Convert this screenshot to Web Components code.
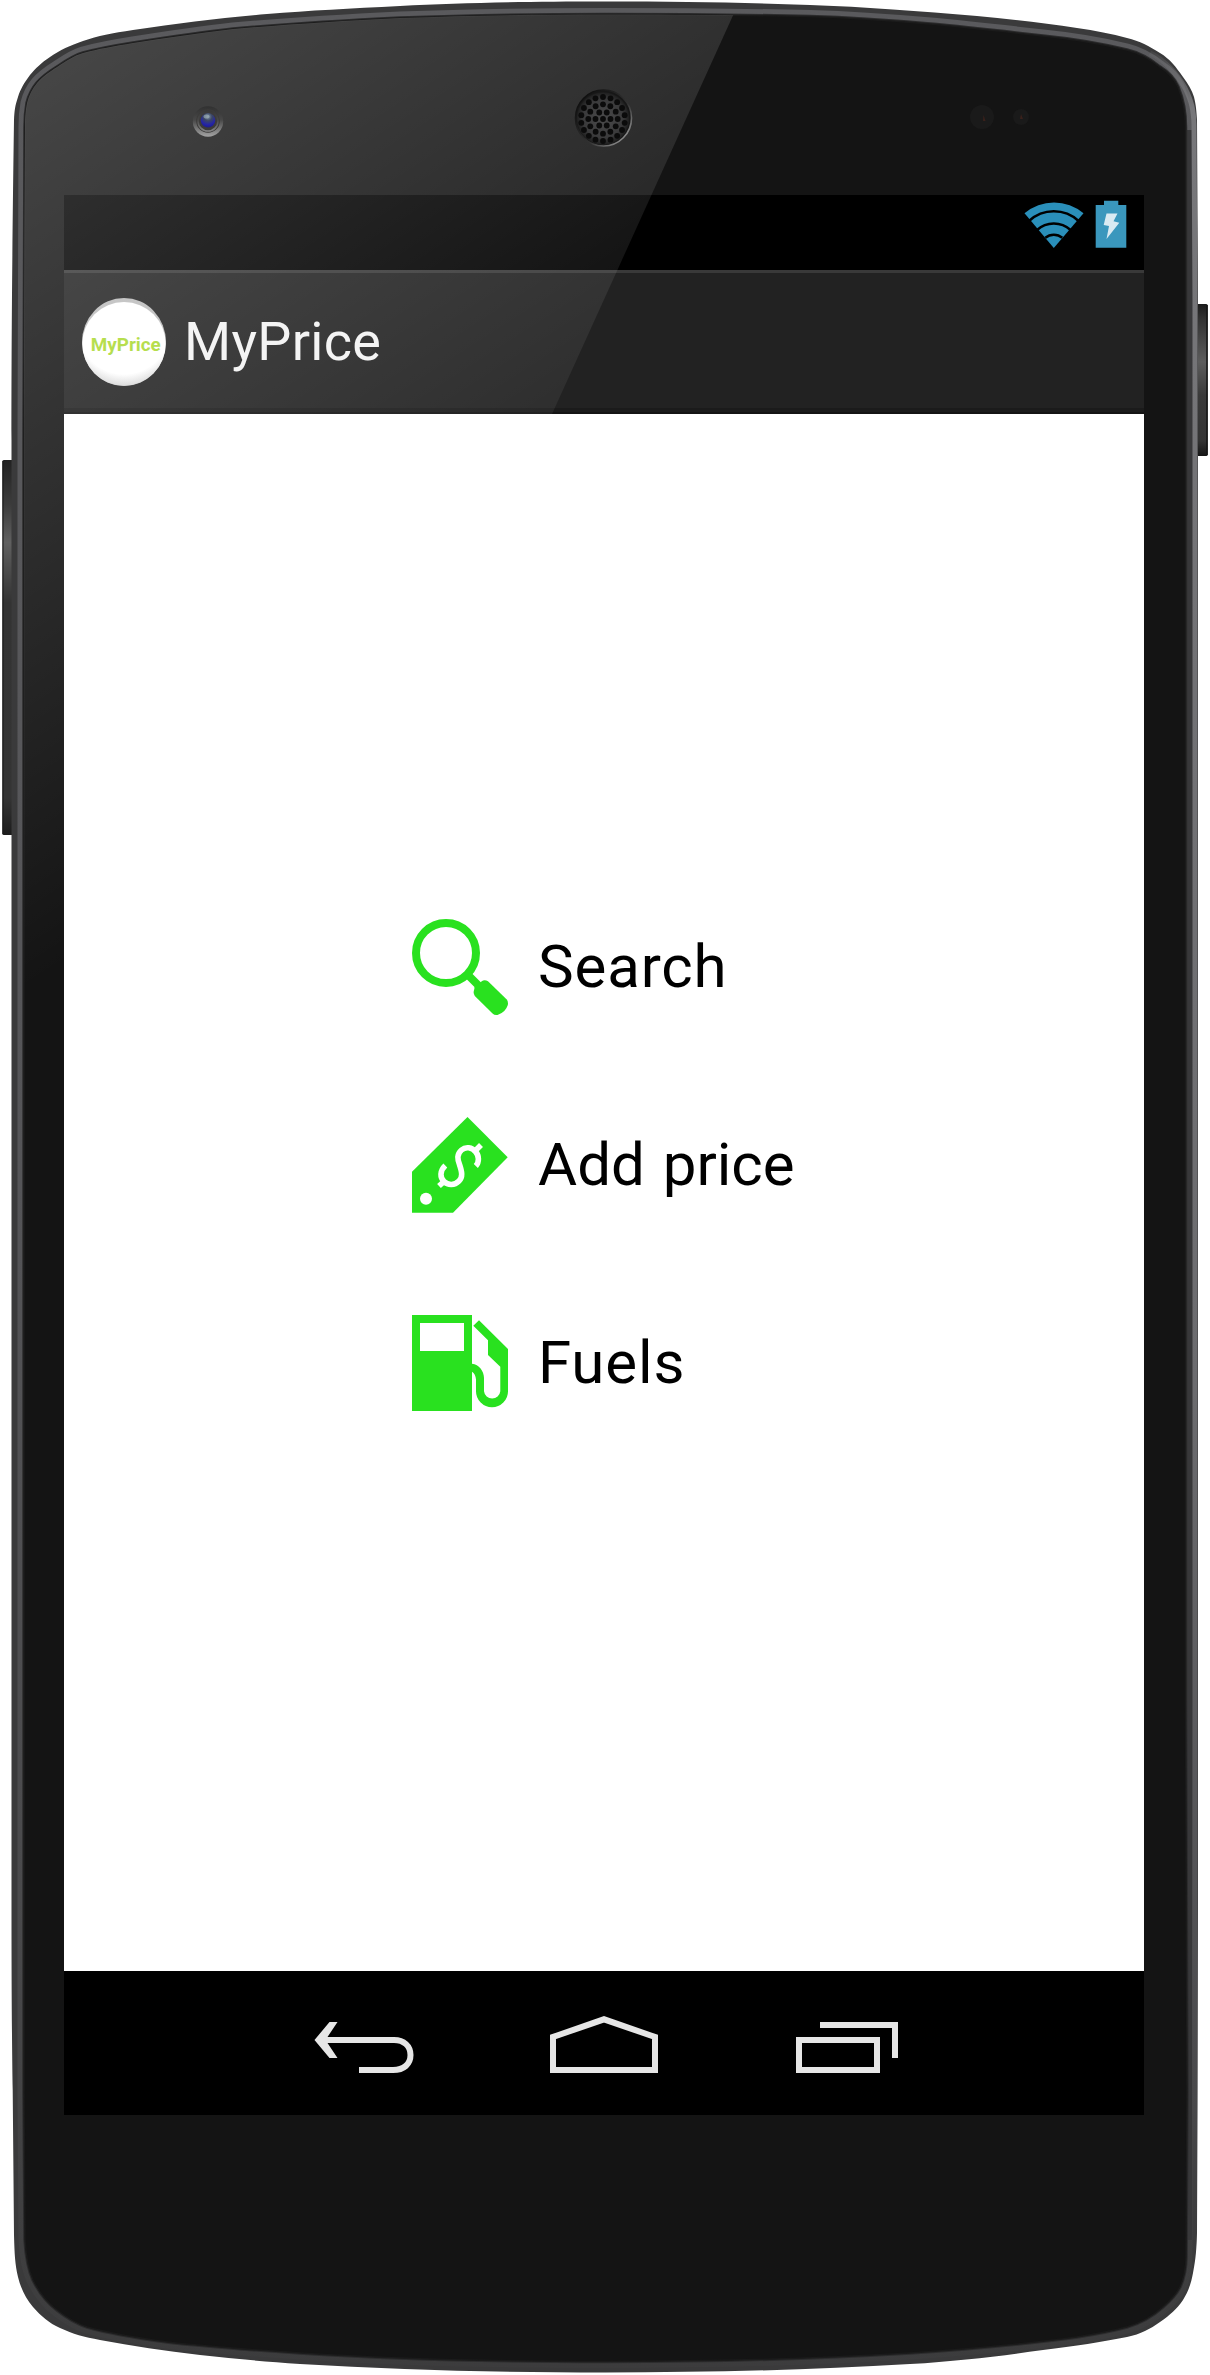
<!DOCTYPE html>
<html lang="en">
<head>
<meta charset="utf-8">
<title>MyPrice</title>
<style>
  html, body { margin: 0; background: #fff; }
  body { width: 1210px; height: 2375px; overflow: hidden; font-family: Roboto, "Liberation Sans", sans-serif; }
</style>
</head>
<body>
<phone-frame>
  <status-bar></status-bar>
  <action-bar>MyPrice</action-bar>
  <main-menu>
    <menu-row icon="search">Search</menu-row>
    <menu-row icon="tag">Add price</menu-row>
    <menu-row icon="fuel">Fuels</menu-row>
  </main-menu>
  <nav-bar></nav-bar>
</phone-frame>
<script>
const define = (name, html) => customElements.define(name, class extends HTMLElement {
  constructor() {
    super();
    this.attachShadow({ mode: 'open' }).innerHTML = html;
  }
});

/* Speaker grille: concentric rings of holes */
const holes = [[0, 1], [7.5, 6], [14.7, 12], [22, 18]].map(([r, n]) =>
  Array.from({ length: n }, (_, i) => {
    const a = i / n * 2 * Math.PI - (n === 6 ? 0 : Math.PI / 2);
    return `<circle cx="${(603 + r * Math.cos(a)).toFixed(2)}" cy="${(119 + r * Math.sin(a)).toFixed(2)}" r="2.9"/>`;
  }).join('')).join('');

const OUTER = 'M605 1.5C520 1.5 460 3 400 6C350 8.500 310 10.500 267 14C220 18 180 23 133 30C112 33 98 36 83 41C70 45.500 60 50 50 57C41 63 36 68 30 75C24 83 20.500 89 18 97C15 106 14.500 110 14 120C12 260 11.500 350 11.500 440V1900C11.500 1990 12 2050 12.700 2090L14 2235C14.500 2254 15 2264 18 2277C21 2289 26 2299 33 2307C41 2316 49 2323 60 2328C73 2334 84 2337 100 2340C132 2346 165 2351 200 2355C235 2359 265 2361.500 300 2364C400 2370 500 2372.500 605 2372.500S810 2370 910 2364C960 2361 1000 2356 1043 2350C1075 2346 1102 2342 1127 2337C1141 2334 1150 2329 1160 2322C1170 2315 1177 2309 1183 2300C1188 2292 1191 2284 1193 2273C1196 2258 1196.500 2248 1197 2233L1197.500 2090L1198 1900V300L1197 120C1196.500 111 1196 105 1194 97C1192 90 1188 84 1183 77C1176 67 1170 59 1160 53C1149 46 1140 41 1127 38C1112 34 1095 30.500 1077 28C1045 23 1010 19 977 16C920 11 865 7 810 5C740 2.500 680 1.500 605 1.500Z';
const INNER = 'M605 14.500C530 14.500 465 15.500 400 18C340 21 285 24.500 233 29C198 33 165 38 133 43C114 46 98 49 83 53C73 56 66 61 57 67C49 72 43 76 37 83C32 89 29 95 27 103C25.500 111 25 117 25 127C24 240 24 340 24 440V2090L25 2240C26 2257 28 2269 33 2280C39 2292 46 2302 57 2310C66 2317 75 2323 87 2327C112 2334 138 2338 167 2342C210 2347 255 2350 300 2353C400 2359.500 500 2361.500 605 2361.500S810 2359 910 2353C970 2349 1025 2344 1077 2337C1096 2334 1112 2331 1127 2327C1141 2323 1153 2316 1163 2307C1171 2300 1176 2295 1180 2287C1184 2278 1186 2270 1186 2257L1187 2090L1185.500 1700V127C1185.500 112 1183 99 1178 87C1174 78 1168 72 1160 67C1150 59 1140 53 1127 50C1102 44 1073 39 1043 36C965 27 890 19 810 16.500C740 15 680 14.500 605 14.500Z';

define('phone-frame', `
<style>
  :host { display: grid; width: 1210px; height: 2375px; }
  svg, .screen { grid-area: 1 / 1; }
  svg { display: block; }
  .screen { display: flex; flex-direction: column; width: 1080px; height: 1920px; margin: 195px 0 0 64px; background: #fff; }
  .glare { pointer-events: none; z-index: 1; }
</style>
<svg width="1210" height="2375" viewBox="0 0 1210 2375">
  <defs>
    <linearGradient id="btnL" x1="0" y1="460" x2="0" y2="835" gradientUnits="userSpaceOnUse">
      <stop offset="0" stop-color="#222"/><stop offset=".12" stop-color="#3c3c3c"/><stop offset=".22" stop-color="#606060"/><stop offset=".38" stop-color="#333"/><stop offset=".9" stop-color="#343434"/><stop offset="1" stop-color="#1c1c1c"/>
    </linearGradient>
    <linearGradient id="btnR" x1="0" y1="304" x2="0" y2="456" gradientUnits="userSpaceOnUse">
      <stop offset="0" stop-color="#1c1c1c"/><stop offset=".1" stop-color="#333"/><stop offset=".38" stop-color="#5c5c5c"/><stop offset=".6" stop-color="#3a3a3a"/><stop offset=".9" stop-color="#333"/><stop offset="1" stop-color="#151515"/>
    </linearGradient>
    <linearGradient id="rimHi" x1="0" y1="0" x2="0" y2="2375" gradientUnits="userSpaceOnUse">
      <stop offset="0" stop-color="#5a5a5d"/><stop offset=".5" stop-color="#555558"/><stop offset=".8" stop-color="#4a4a4c"/><stop offset=".93" stop-color="#404041"/><stop offset="1" stop-color="#3c3c3d"/>
    </linearGradient>
    <linearGradient id="rightHi" x1="0" y1="40" x2="0" y2="2290" gradientUnits="userSpaceOnUse">
      <stop offset="0" stop-color="#77777a" stop-opacity="0"/><stop offset=".03" stop-color="#77777a"/><stop offset=".6" stop-color="#6c6c6f"/><stop offset=".92" stop-color="#48484a"/><stop offset="1" stop-color="#3c3c3d" stop-opacity="0"/>
    </linearGradient>
    <linearGradient id="lens" x1="0" y1="106" x2="0" y2="137" gradientUnits="userSpaceOnUse">
      <stop offset="0" stop-color="#303030"/><stop offset=".45" stop-color="#484848"/><stop offset="1" stop-color="#a5a5a5"/>
    </linearGradient>
    <radialGradient id="iris" cx=".5" cy=".25" r=".8">
      <stop offset="0" stop-color="#8093a6"/><stop offset=".35" stop-color="#3c4763"/><stop offset=".7" stop-color="#2424a8"/><stop offset="1" stop-color="#1c1c80"/>
    </radialGradient>
    <linearGradient id="grille" x1="580" y1="96" x2="628" y2="142" gradientUnits="userSpaceOnUse">
      <stop offset="0" stop-color="#0c0c0c"/><stop offset=".6" stop-color="#333"/><stop offset="1" stop-color="#a0a0a0"/>
    </linearGradient>
    <radialGradient id="mesh"><stop offset="0" stop-color="#4a4a4b"/><stop offset=".75" stop-color="#3a3a3b"/><stop offset="1" stop-color="#1e1e1e"/></radialGradient>
  </defs>
  <rect x="2.300" y="460" width="12" height="375" rx="1.500" fill="url(#btnL)"/>
  <path d="M3 461V834" stroke="#191919" stroke-width="1"/>
  <rect x="1195" y="304" width="12.700" height="152" rx="1.500" fill="url(#btnR)"/>
  <path d="M1207 305V455" stroke="#151515" stroke-width="1.500"/>
  <path d="${OUTER}" fill="#3a3a3b"/>
  <path d="${INNER}" fill="none" stroke="url(#rimHi)" stroke-width="13"/>
  <path d="M1188.500 130V2240" stroke="#38383a" stroke-width="7"/>
  <path d="${INNER}" fill="#141414" stroke="#2c2c2d" stroke-width="3.500"/>
  <path d="M1150 53C1165 60 1178 75 1185 88C1192 102 1193.500 110 1194 125L1195 300V1900L1194.500 2230C1194 2252 1190 2280 1180 2295" fill="none" stroke="url(#rightHi)" stroke-width="5"/>
  <path d="${INNER}" fill="#141414" stroke="#1b1b1b" stroke-width="1.500"/>
  <circle cx="982" cy="117" r="12" fill="#1a1a1a"/><path d="M983.500 115l2 6h-2.500z" fill="#3a211b"/>
  <circle cx="1021" cy="117" r="8" fill="#1a1a1a"/><path d="M1021 114l2 5h-3z" fill="#3a211b"/>
</svg>
<div class="screen"><slot></slot></div>
<svg class="glare" width="1210" height="2375" viewBox="0 0 1210 2375">
  <defs>
    <linearGradient id="shine" gradientUnits="userSpaceOnUse" x1="-24" y1="36" x2="425" y2="735">
      <stop offset="0" stop-color="#fff" stop-opacity=".23"/><stop offset="1" stop-color="#fff" stop-opacity="0"/>
    </linearGradient>
    <clipPath id="sheen"><path d="M0 0H740L552 414L25 1573H0Z"/></clipPath>
  </defs>
  <path d="${INNER}" fill="url(#shine)" clip-path="url(#sheen)"/>
  <circle cx="208" cy="121.500" r="15.200" fill="url(#lens)"/>
  <circle cx="208" cy="121" r="11.800" fill="#3c3b3a"/>
  <circle cx="208" cy="121" r="10" fill="none" stroke="url(#lens)" stroke-width="1.600"/>
  <circle cx="208" cy="120.300" r="7.200" fill="url(#iris)"/>
  <ellipse cx="206.500" cy="116.500" rx="3" ry="2" fill="#a2b4b8" opacity=".6"/>
  <circle cx="603.500" cy="118" r="28" fill="#171717" stroke="url(#grille)" stroke-width="1.600"/>
  <circle cx="603" cy="118.500" r="26.200" fill="url(#mesh)"/>
  <g fill="#0b0b0b">${holes}</g>
</svg>`);

define('status-bar', `
<style>
  :host { display: flex; justify-content: flex-end; gap: 11px; height: 75px; padding: 5px 17px 0 0; box-sizing: border-box; background: #000; }
  svg { display: block; }
</style>
<svg width="60" height="49" viewBox="1024.500 200 60 49">
  <path d="M1054.300 248L1025 213.300A45.500 45.500 0 0 1 1084 213.300Z" fill="#2a8fba"/>
  <g fill="none" stroke="#000" stroke-width="2.500">
    <path d="M1029.500 221A36.500 36.500 0 0 1 1079.100 221"/>
    <path d="M1037.500 230A24.800 24.800 0 0 1 1071.100 230"/>
    <path d="M1045.800 237.800A13.300 13.300 0 0 1 1062.800 237.800"/>
  </g>
</svg>
<svg width="32" height="49" viewBox="1095 200 32 49">
  <path d="M1104 200.700H1118.300V205H1126.300V247.700H1095.700V205H1104Z" fill="#3a97bd"/>
  <path d="M1106.500 213.500H1117.500L1113.500 221.300L1119.300 222.700L1106.500 239L1109 226L1103.700 225Z" fill="#d9eaf2"/>
</svg>`);

define('action-bar', `
<style>
  :host { display: flex; align-items: center; gap: 18px; height: 144px; padding-left: 18px; box-sizing: border-box;
    background: linear-gradient(#393939 0 3px, #222 3px 138px, #1b1b1b 138px 142.500px, #141414 142.500px); }
  svg { display: block; }
  .title { font-size: 54px; line-height: 64px; letter-spacing: .3px; color: #f3f3f3; white-space: nowrap; }
</style>
<svg width="84" height="88" viewBox="0 0 84 88">
  <defs><radialGradient id="disc" cx=".5" cy=".3" r=".72">
    <stop offset=".78" stop-color="#fff"/><stop offset="1" stop-color="#d2d2d2"/></radialGradient></defs>
  <ellipse cx="42" cy="44" rx="42" ry="44" fill="#bcbcbc"/>
  <ellipse cx="42" cy="45.900" rx="41.700" ry="41.900" fill="url(#disc)"/>
  <text x="8.800" y="52.500" font-size="19" font-weight="700" textLength="70" lengthAdjust="spacingAndGlyphs" fill="#abd932">MyPrice</text>
</svg>
<div class="title"><slot></slot></div>`);

define('main-menu', `
<style>
  :host { display: flex; flex: 1; flex-direction: column; gap: 102px; padding: 505px 0 0 348px; box-sizing: border-box; background: #fff; }
</style><slot></slot>`);

const ICONS = {
  search: `<circle cx="34" cy="34" r="30" fill="none" stroke="#29e11f" stroke-width="8"/>
    <path d="M56 56L68 68" stroke="#29e11f" stroke-width="8"/>
    <path d="M62.700 68.300L69.500 62.400Q72.500 60.300 76 62.300L94.500 80.300Q96.500 82.500 95.800 86Q93.500 93.500 85.500 95.900Q82.500 96.300 80.800 94.800L62.800 77Q61.500 75.500 61.700 72.500Z" fill="#29e11f"/>`,
  tag: `<path d="M55.500 0L95.700 40.300L41 95.700H0V54.700Z" fill="#29e11f"/><circle cx="14" cy="81.700" r="6" fill="#fff"/>
    <g fill="none" stroke="#fff" stroke-width="5.600"><path d="M63.800 49C67.500 45 67 38.500 63.800 35C60 30 53.500 29.500 49.500 33C44.500 37.500 45.500 42 47.500 47.500C50 55 51 60 47 64C42.500 68.500 36 68.500 32 64.500C28 60.500 27.500 54 33.300 48.500"/>
    <path d="M69 28L64 33M27 69L32 64.500"/></g>`,
  fuel: `<path fill-rule="evenodd" d="M0 0H60V96H0ZM8 8V36H52V8Z" fill="#29e11f"/>
    <path d="M67 5.300L96 34V76.300A16 16 0 0 1 64 76.300V64.500Q63.500 59 60 56.700V48.700C67 49.500 72 56 72 63V76.300A8.200 8.200 0 0 0 88.300 76.300V51.700L76 40V25.300L61.300 10.700Z" fill="#29e11f"/>`
};
class MenuRow extends HTMLElement {
  connectedCallback() {
    if (this.shadowRoot) return;
    this.attachShadow({ mode: 'open' }).innerHTML = `
<style>
  :host { display: flex; align-items: center; gap: 30px; height: 96px; }
  svg { display: block; flex: none; }
  .label { padding-bottom: 1px; font-size: 60px; line-height: 70px; letter-spacing: .85px; color: #000; white-space: nowrap; }
  :host([icon="tag"]) .label { letter-spacing: 0; word-spacing: 3px; }
</style>
<svg width="96" height="96" viewBox="0 0 96 96">${ICONS[this.getAttribute('icon')]}</svg>
<div class="label"><slot></slot></div>`;
  }
}
customElements.define('menu-row', MenuRow);

define('nav-bar', `
<style>
  :host { display: flex; align-items: flex-start; height: 144px; padding: 42px 0 0 246px; box-sizing: border-box; background: #000; }
  svg { display: block; }
  .home { margin-left: 132px; } .recent { margin-left: 134px; }
</style>
<svg width="108" height="62" viewBox="310 2013 108 62" fill="none" stroke="#e6e6e6" stroke-width="6">
  <path d="M320 2040H394C404 2040 410.500 2046 410.500 2055S404 2070 393 2070H359"/>
  <path d="M329.500 2022H337.500L325.500 2040L337.500 2058H329.500L314.500 2040Z" fill="#e6e6e6" stroke="none"/>
</svg>
<svg class="home" width="108" height="62" viewBox="550 2013 108 62" fill="none" stroke="#e6e6e6" stroke-width="6">
  <path d="M553 2070V2037L604 2019.300L655 2037V2070Z"/>
</svg>
<svg class="recent" width="108" height="62" viewBox="792 2013 108 62" fill="none" stroke="#e6e6e6" stroke-width="6">
  <path d="M799 2040H877V2070H799ZM820 2025H895V2058"/>
</svg>`);
</script>
</body>
</html>
